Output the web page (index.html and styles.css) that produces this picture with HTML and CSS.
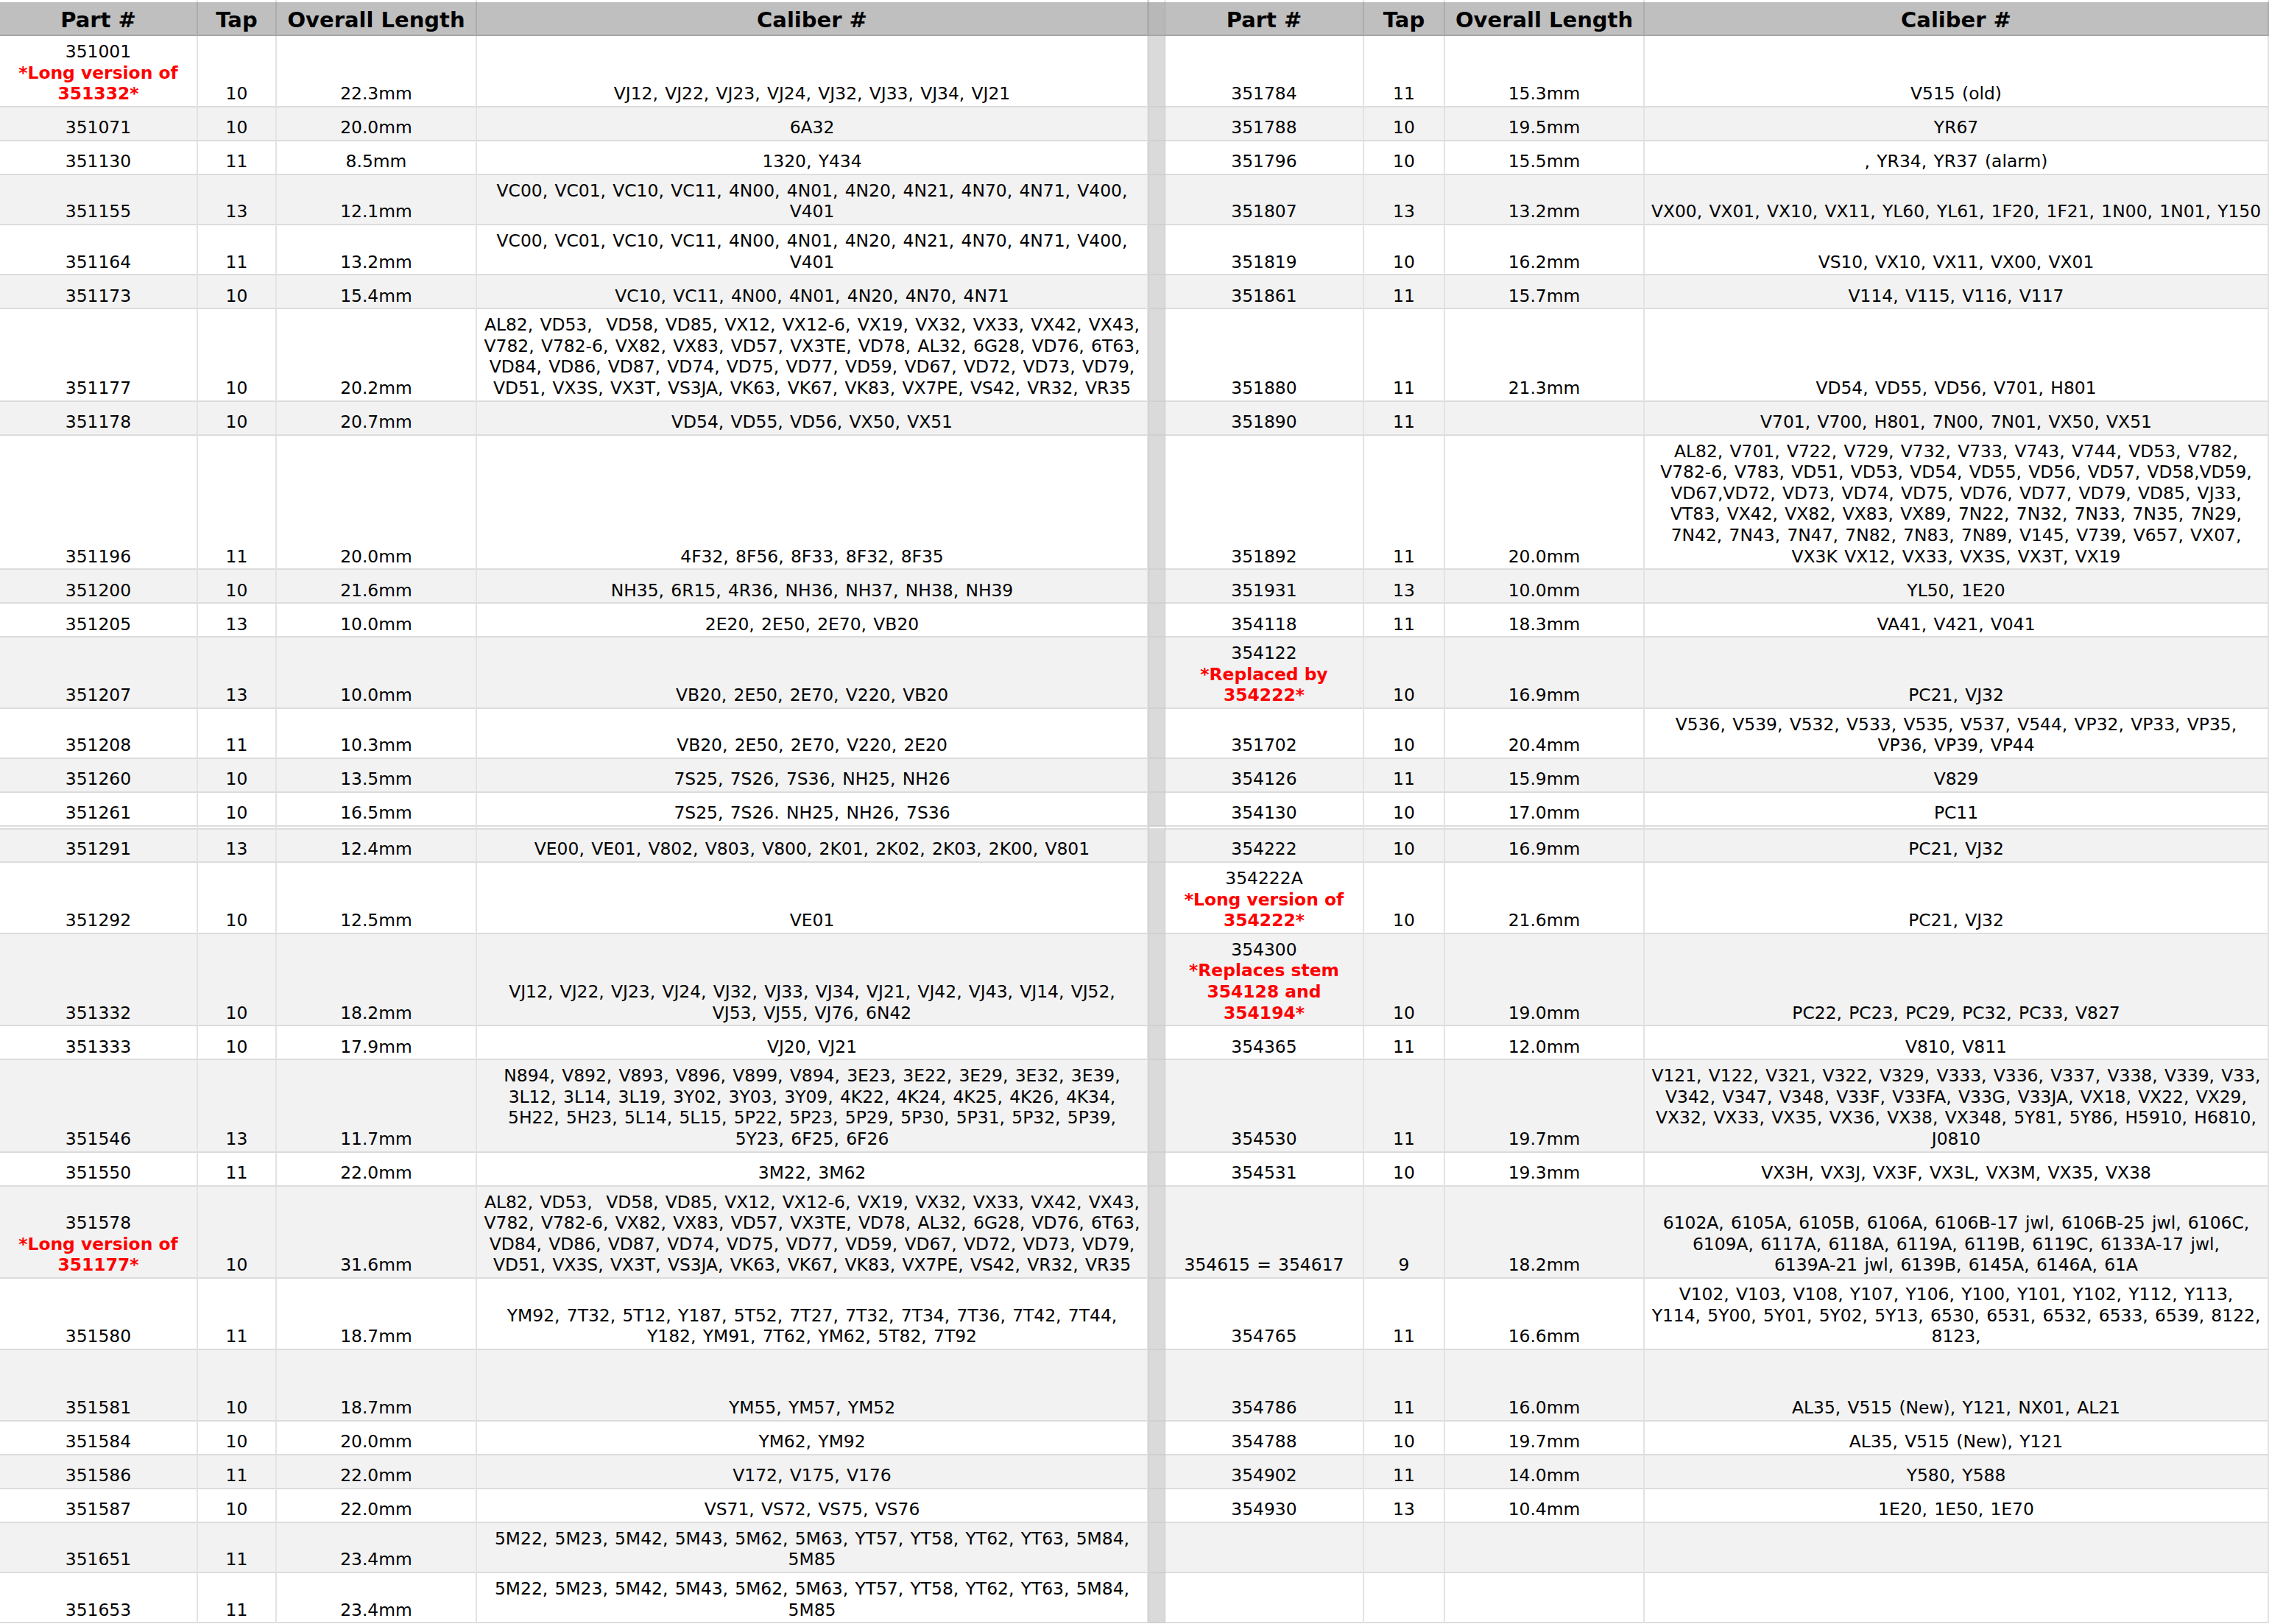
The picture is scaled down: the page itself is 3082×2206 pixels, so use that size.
FILE: index.html
```html
<!DOCTYPE html>
<html lang="en">
<head>
<meta charset="utf-8">
<title>Stem parts</title>
<link rel="stylesheet" href="styles.css">
</head>
<body>
<table class="sheet">
  <colgroup>
    <col class="c-part"><col class="c-tap"><col class="c-len"><col class="c-cal">
    <col class="c-gap">
    <col class="c-part2"><col class="c-tap2"><col class="c-len2"><col class="c-cal2">
  </colgroup>
  <thead>
    <tr class="stub"><td></td><td></td><td></td><td></td><td class="gap"></td><td></td><td></td><td></td><td></td></tr>
    <tr class="head">
      <th>Part #</th><th>Tap</th><th>Overall Length</th><th>Caliber #</th>
      <th class="gap"></th>
      <th>Part #</th><th>Tap</th><th>Overall Length</th><th>Caliber #</th>
    </tr>
  </thead>
  <tbody>
    <tr>
      <td>351001<br><span class="note">*Long version of<br>351332*</span></td><td>10</td><td>22.3mm</td><td>VJ12, VJ22, VJ23, VJ24, VJ32, VJ33, VJ34, VJ21</td>
      <td class="gap"></td>
      <td>351784</td><td>11</td><td>15.3mm</td><td>V515 (old)</td>
    </tr>
    <tr>
      <td>351071</td><td>10</td><td>20.0mm</td><td>6A32</td>
      <td class="gap"></td>
      <td>351788</td><td>10</td><td>19.5mm</td><td>YR67</td>
    </tr>
    <tr>
      <td>351130</td><td>11</td><td>8.5mm</td><td>1320, Y434</td>
      <td class="gap"></td>
      <td>351796</td><td>10</td><td>15.5mm</td><td>, YR34, YR37 (alarm)</td>
    </tr>
    <tr>
      <td>351155</td><td>13</td><td>12.1mm</td><td>VC00, VC01, VC10, VC11, 4N00, 4N01, 4N20, 4N21, 4N70, 4N71, V400,<br>V401</td>
      <td class="gap"></td>
      <td>351807</td><td>13</td><td>13.2mm</td><td>VX00, VX01, VX10, VX11, YL60, YL61, 1F20, 1F21, 1N00, 1N01, Y150</td>
    </tr>
    <tr>
      <td>351164</td><td>11</td><td>13.2mm</td><td>VC00, VC01, VC10, VC11, 4N00, 4N01, 4N20, 4N21, 4N70, 4N71, V400,<br>V401</td>
      <td class="gap"></td>
      <td>351819</td><td>10</td><td>16.2mm</td><td>VS10, VX10, VX11, VX00, VX01</td>
    </tr>
    <tr>
      <td>351173</td><td>10</td><td>15.4mm</td><td>VC10, VC11, 4N00, 4N01, 4N20, 4N70, 4N71</td>
      <td class="gap"></td>
      <td>351861</td><td>11</td><td>15.7mm</td><td>V114, V115, V116, V117</td>
    </tr>
    <tr>
      <td>351177</td><td>10</td><td>20.2mm</td><td>AL82, VD53,&nbsp; VD58, VD85, VX12, VX12-6, VX19, VX32, VX33, VX42, VX43,<br>V782, V782-6, VX82, VX83, VD57, VX3TE, VD78, AL32, 6G28, VD76, 6T63,<br>VD84, VD86, VD87, VD74, VD75, VD77, VD59, VD67, VD72, VD73, VD79,<br>VD51, VX3S, VX3T, VS3JA, VK63, VK67, VK83, VX7PE, VS42, VR32, VR35</td>
      <td class="gap"></td>
      <td>351880</td><td>11</td><td>21.3mm</td><td>VD54, VD55, VD56, V701, H801</td>
    </tr>
    <tr>
      <td>351178</td><td>10</td><td>20.7mm</td><td>VD54, VD55, VD56, VX50, VX51</td>
      <td class="gap"></td>
      <td>351890</td><td>11</td><td></td><td>V701, V700, H801, 7N00, 7N01, VX50, VX51</td>
    </tr>
    <tr>
      <td>351196</td><td>11</td><td>20.0mm</td><td>4F32, 8F56, 8F33, 8F32, 8F35</td>
      <td class="gap"></td>
      <td>351892</td><td>11</td><td>20.0mm</td><td>AL82, V701, V722, V729, V732, V733, V743, V744, VD53, V782,<br>V782-6, V783, VD51, VD53, VD54, VD55, VD56, VD57, VD58,VD59,<br>VD67,VD72, VD73, VD74, VD75, VD76, VD77, VD79, VD85, VJ33,<br>VT83, VX42, VX82, VX83, VX89, 7N22, 7N32, 7N33, 7N35, 7N29,<br>7N42, 7N43, 7N47, 7N82, 7N83, 7N89, V145, V739, V657, VX07,<br>VX3K VX12, VX33, VX3S, VX3T, VX19</td>
    </tr>
    <tr>
      <td>351200</td><td>10</td><td>21.6mm</td><td>NH35, 6R15, 4R36, NH36, NH37, NH38, NH39</td>
      <td class="gap"></td>
      <td>351931</td><td>13</td><td>10.0mm</td><td>YL50, 1E20</td>
    </tr>
    <tr>
      <td>351205</td><td>13</td><td>10.0mm</td><td>2E20, 2E50, 2E70, VB20</td>
      <td class="gap"></td>
      <td>354118</td><td>11</td><td>18.3mm</td><td>VA41, V421, V041</td>
    </tr>
    <tr>
      <td>351207</td><td>13</td><td>10.0mm</td><td>VB20, 2E50, 2E70, V220, VB20</td>
      <td class="gap"></td>
      <td>354122<br><span class="note">*Replaced by<br>354222*</span></td><td>10</td><td>16.9mm</td><td>PC21, VJ32</td>
    </tr>
    <tr>
      <td>351208</td><td>11</td><td>10.3mm</td><td>VB20, 2E50, 2E70, V220, 2E20</td>
      <td class="gap"></td>
      <td>351702</td><td>10</td><td>20.4mm</td><td>V536, V539, V532, V533, V535, V537, V544, VP32, VP33, VP35,<br>VP36, VP39, VP44</td>
    </tr>
    <tr>
      <td>351260</td><td>10</td><td>13.5mm</td><td>7S25, 7S26, 7S36, NH25, NH26</td>
      <td class="gap"></td>
      <td>354126</td><td>11</td><td>15.9mm</td><td>V829</td>
    </tr>
    <tr>
      <td>351261</td><td>10</td><td>16.5mm</td><td>7S25, 7S26. NH25, NH26, 7S36</td>
      <td class="gap"></td>
      <td>354130</td><td>10</td><td>17.0mm</td><td>PC11</td>
    </tr>
    <tr class="split">
      <td>351291</td><td>13</td><td>12.4mm</td><td>VE00, VE01, V802, V803, V800, 2K01, 2K02, 2K03, 2K00, V801</td>
      <td class="gap"></td>
      <td>354222</td><td>10</td><td>16.9mm</td><td>PC21, VJ32</td>
    </tr>
    <tr>
      <td>351292</td><td>10</td><td>12.5mm</td><td>VE01</td>
      <td class="gap"></td>
      <td>354222A<br><span class="note">*Long version of<br>354222*</span></td><td>10</td><td>21.6mm</td><td>PC21, VJ32</td>
    </tr>
    <tr>
      <td>351332</td><td>10</td><td>18.2mm</td><td>VJ12, VJ22, VJ23, VJ24, VJ32, VJ33, VJ34, VJ21, VJ42, VJ43, VJ14, VJ52,<br>VJ53, VJ55, VJ76, 6N42</td>
      <td class="gap"></td>
      <td>354300<br><span class="note">*Replaces stem<br>354128 and<br>354194*</span></td><td>10</td><td>19.0mm</td><td>PC22, PC23, PC29, PC32, PC33, V827</td>
    </tr>
    <tr>
      <td>351333</td><td>10</td><td>17.9mm</td><td>VJ20, VJ21</td>
      <td class="gap"></td>
      <td>354365</td><td>11</td><td>12.0mm</td><td>V810, V811</td>
    </tr>
    <tr>
      <td>351546</td><td>13</td><td>11.7mm</td><td>N894, V892, V893, V896, V899, V894, 3E23, 3E22, 3E29, 3E32, 3E39,<br>3L12, 3L14, 3L19, 3Y02, 3Y03, 3Y09, 4K22, 4K24, 4K25, 4K26, 4K34,<br>5H22, 5H23, 5L14, 5L15, 5P22, 5P23, 5P29, 5P30, 5P31, 5P32, 5P39,<br>5Y23, 6F25, 6F26</td>
      <td class="gap"></td>
      <td>354530</td><td>11</td><td>19.7mm</td><td>V121, V122, V321, V322, V329, V333, V336, V337, V338, V339, V33,<br>V342, V347, V348, V33F, V33FA, V33G, V33JA, VX18, VX22, VX29,<br>VX32, VX33, VX35, VX36, VX38, VX348, 5Y81, 5Y86, H5910, H6810,<br>J0810</td>
    </tr>
    <tr>
      <td>351550</td><td>11</td><td>22.0mm</td><td>3M22, 3M62</td>
      <td class="gap"></td>
      <td>354531</td><td>10</td><td>19.3mm</td><td>VX3H, VX3J, VX3F, VX3L, VX3M, VX35, VX38</td>
    </tr>
    <tr>
      <td>351578<br><span class="note">*Long version of<br>351177*</span></td><td>10</td><td>31.6mm</td><td>AL82, VD53,&nbsp; VD58, VD85, VX12, VX12-6, VX19, VX32, VX33, VX42, VX43,<br>V782, V782-6, VX82, VX83, VD57, VX3TE, VD78, AL32, 6G28, VD76, 6T63,<br>VD84, VD86, VD87, VD74, VD75, VD77, VD59, VD67, VD72, VD73, VD79,<br>VD51, VX3S, VX3T, VS3JA, VK63, VK67, VK83, VX7PE, VS42, VR32, VR35</td>
      <td class="gap"></td>
      <td>354615 = 354617</td><td>9</td><td>18.2mm</td><td>6102A, 6105A, 6105B, 6106A, 6106B-17 jwl, 6106B-25 jwl, 6106C,<br>6109A, 6117A, 6118A, 6119A, 6119B, 6119C, 6133A-17 jwl,<br>6139A-21 jwl, 6139B, 6145A, 6146A, 61A</td>
    </tr>
    <tr>
      <td>351580</td><td>11</td><td>18.7mm</td><td>YM92, 7T32, 5T12, Y187, 5T52, 7T27, 7T32, 7T34, 7T36, 7T42, 7T44,<br>Y182, YM91, 7T62, YM62, 5T82, 7T92</td>
      <td class="gap"></td>
      <td>354765</td><td>11</td><td>16.6mm</td><td>V102, V103, V108, Y107, Y106, Y100, Y101, Y102, Y112, Y113,<br>Y114, 5Y00, 5Y01, 5Y02, 5Y13, 6530, 6531, 6532, 6533, 6539, 8122,<br>8123,</td>
    </tr>
    <tr class="tall">
      <td>351581</td><td>10</td><td>18.7mm</td><td>YM55, YM57, YM52</td>
      <td class="gap"></td>
      <td>354786</td><td>11</td><td>16.0mm</td><td>AL35, V515 (New), Y121, NX01, AL21</td>
    </tr>
    <tr>
      <td>351584</td><td>10</td><td>20.0mm</td><td>YM62, YM92</td>
      <td class="gap"></td>
      <td>354788</td><td>10</td><td>19.7mm</td><td>AL35, V515 (New), Y121</td>
    </tr>
    <tr>
      <td>351586</td><td>11</td><td>22.0mm</td><td>V172, V175, V176</td>
      <td class="gap"></td>
      <td>354902</td><td>11</td><td>14.0mm</td><td>Y580, Y588</td>
    </tr>
    <tr>
      <td>351587</td><td>10</td><td>22.0mm</td><td>VS71, VS72, VS75, VS76</td>
      <td class="gap"></td>
      <td>354930</td><td>13</td><td>10.4mm</td><td>1E20, 1E50, 1E70</td>
    </tr>
    <tr>
      <td>351651</td><td>11</td><td>23.4mm</td><td>5M22, 5M23, 5M42, 5M43, 5M62, 5M63, YT57, YT58, YT62, YT63, 5M84,<br>5M85</td>
      <td class="gap"></td>
      <td></td><td></td><td></td><td></td>
    </tr>
    <tr>
      <td>351653</td><td>11</td><td>23.4mm</td><td>5M22, 5M23, 5M42, 5M43, 5M62, 5M63, YT57, YT58, YT62, YT63, 5M84,<br>5M85</td>
      <td class="gap"></td>
      <td></td><td></td><td></td><td></td>
    </tr>
  </tbody>
</table>
</body>
</html>
```

FILE: styles.css
```css
html, body {
  margin: 0;
  padding: 0;
  background: #ffffff;
}

body {
  font-family: "DejaVu Sans", Verdana, sans-serif;
  color: #000000;
}

.sheet {
  width: 3082px;
  table-layout: fixed;
  border-collapse: separate;
  border-spacing: 0;
}

.c-part { width: 269px; }
.c-tap { width: 107px; }
.c-len { width: 272px; }
.c-cal { width: 912px; }
.c-gap { width: 23px; }
.c-part2 { width: 270px; }
.c-tap2 { width: 110px; }
.c-len2 { width: 271px; }
.c-cal2 { width: 848px; }

.sheet td {
  padding: 7px 3px 2px;
  font-size: 23.4px;
  line-height: 28.6px;
  text-align: center;
  vertical-align: bottom;
  white-space: nowrap;
  word-spacing: 0.08em;
  border-bottom: 2px solid #dcdcdc;
  border-right: 2px solid #e3e3e3;
  background: #ffffff;
}

.sheet tbody tr {
  height: 46px;
}

.sheet tbody tr:nth-child(even) td {
  background: #f2f2f2;
}

.sheet tbody td.gap,
.sheet tbody tr:nth-child(even) td.gap {
  background: #dadada;
  border-right: 1px solid #c6c6c6;
  border-left: 1px solid #c6c6c6;
  border-bottom: 2px solid #d0d0d0;
  padding: 0;
}

.sheet tbody tr.tall {
  height: 97px;
}

.sheet tbody tr.split {
  height: 49px;
}

.sheet tbody tr.split td {
  box-shadow: inset 0 2px 0 #ffffff, inset 0 4px 0 #dcdcdc;
}

.stub td {
  height: 3px;
  padding: 0;
  line-height: 0;
  font-size: 0;
  border-bottom: 0;
  border-right: 2px solid #e3e3e3;
  background: #ffffff;
}

.stub td.gap {
  border-right: 1px solid #c6c6c6;
  border-left: 1px solid #c6c6c6;
}

.head {
  height: 46px;
}

.head th {
  padding: 4px 0 0;
  font-size: 29px;
  font-weight: bold;
  line-height: 34px;
  text-align: center;
  vertical-align: middle;
  white-space: nowrap;
  background: #bfbfbf;
  border-bottom: 2px solid #a6a6a6;
  border-right: 2px solid #acacac;
}

.head th.gap {
  padding: 0;
  border-right: 1px solid #aaaaaa;
  border-left: 1px solid #aaaaaa;
  background: #b8b8b8;
}

.note {
  color: #ff0000;
  font-weight: bold;
  word-spacing: 0;
}
```
